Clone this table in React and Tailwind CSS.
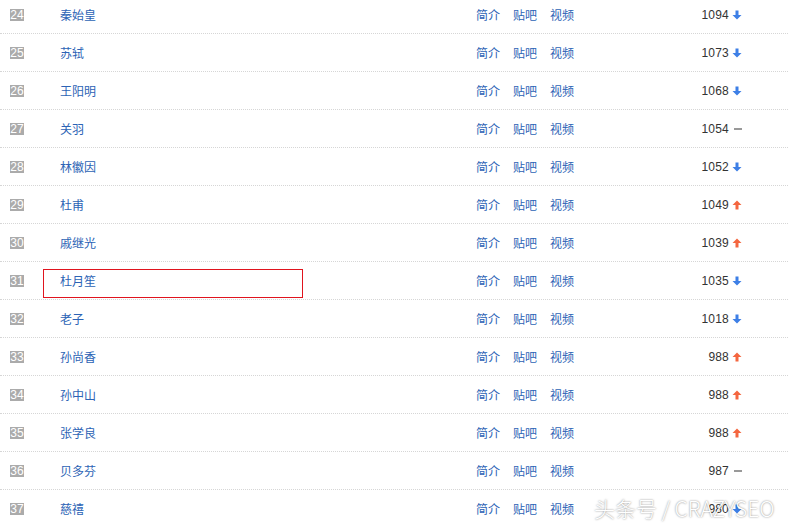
import React from 'react';

const rows = [
  [24, '秦始皇', 1094, 'down'],
  [25, '苏轼', 1073, 'down'],
  [26, '王阳明', 1068, 'down'],
  [27, '关羽', 1054, 'flat'],
  [28, '林徽因', 1052, 'down'],
  [29, '杜甫', 1049, 'up'],
  [30, '戚继光', 1039, 'up'],
  [31, '杜月笙', 1035, 'down'],
  [32, '老子', 1018, 'down'],
  [33, '孙尚香', 988, 'up'],
  [34, '孙中山', 988, 'up'],
  [35, '张学良', 988, 'up'],
  [36, '贝多芬', 987, 'flat'],
  [37, '慈禧', 980, 'down'],
];

const Trend = ({ dir }) => {
  if (dir === 'flat') {
    return <span className="block w-[8px] h-[2px] bg-[#999] ml-[2px]" />;
  }
  const up = dir === 'up';
  return (
    <svg width="10" height="10" viewBox="0 0 10 10" className="block">
      {up ? (
        <path d="M5 0.5 L9.5 5 L6.5 5 L6.5 9.5 L3.5 9.5 L3.5 5 L0.5 5 Z" fill="#f4663f" />
      ) : (
        <path d="M3.5 0.5 L6.5 0.5 L6.5 5 L9.5 5 L5 9.5 L0.5 5 L3.5 5 Z" fill="#3d7fe6" />
      )}
    </svg>
  );
};

export default function App() {
  return (
    <div className="relative w-[788px] h-[527px] overflow-hidden bg-white font-['Liberation_Sans','Noto_Sans_CJK_SC',sans-serif] text-[12px]">
      <div className="-mt-[4px]">
        {rows.map(([rank, name, score, dir]) => (
          <div key={rank} className="flex items-center h-[38px] border-b border-dotted border-[#d6d6d6]">
            <span className="ml-[10px] w-[14px] h-[12px] bg-[#ababab] text-white text-[12px] leading-[12px] flex items-center justify-center">
              {rank}
            </span>
            <span className="ml-[36px] text-[#2c63b5] font-['Noto_Sans_CJK_SC',sans-serif]">{name}</span>
            <div className="ml-auto flex items-center gap-[13px] text-[#2c63b5] font-['Noto_Sans_CJK_SC',sans-serif]">
              <span>简介</span>
              <span>贴吧</span>
              <span>视频</span>
            </div>
            <div className="w-[168px] flex items-center justify-end gap-[3px] mr-[46px] text-[#333]">
              <span className="tracking-[0.2px]">{score}</span>
              <span className="w-[10px] flex items-center">
                <Trend dir={dir} />
              </span>
            </div>
          </div>
        ))}
      </div>

      <div className="absolute left-[43px] top-[269px] w-[260px] h-[29px] border border-[#e0141e]" />

      <div className="absolute left-[594px] top-[494px] text-[21px] leading-[28px] text-white font-['Noto_Sans_CJK_SC',sans-serif] font-light [text-shadow:0_0_2px_rgba(0,0,0,0.55)] whitespace-nowrap">
        头条号 / CRAZYSEO
      </div>
    </div>
  );
}
